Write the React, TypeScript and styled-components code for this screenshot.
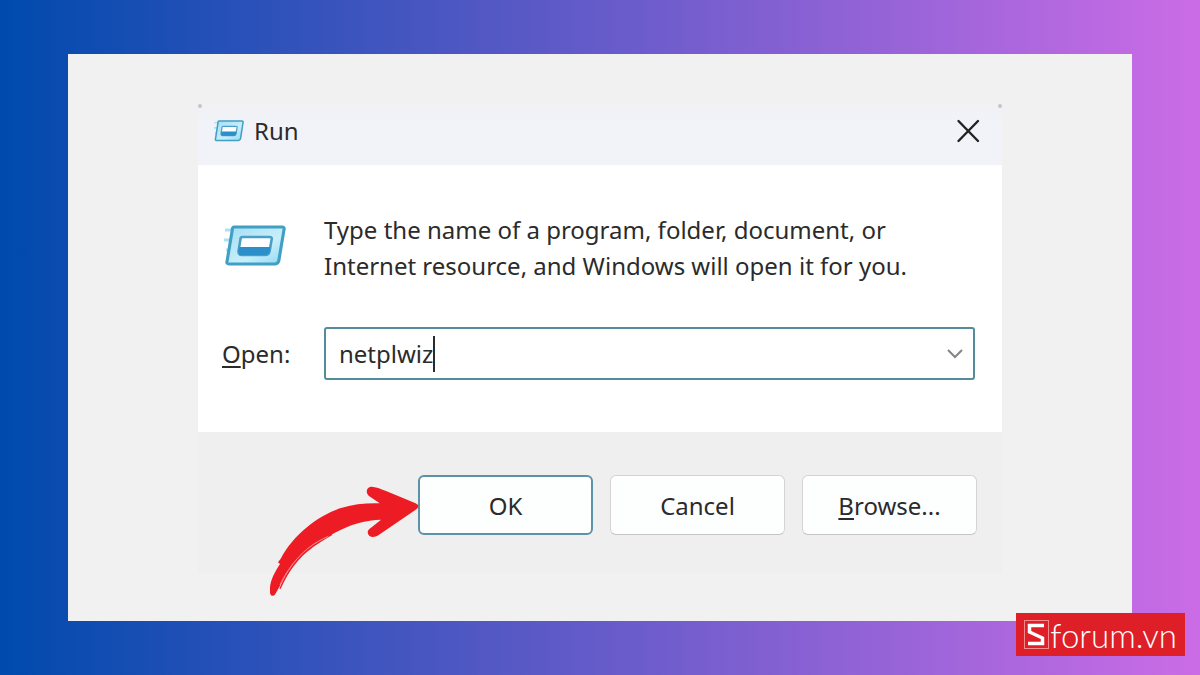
import React, { useState } from 'react';
import styled, { createGlobalStyle } from 'styled-components';

const GlobalStyle = createGlobalStyle`
  *, *::before, *::after { box-sizing: border-box; }
  body { margin: 0; }
  body, button, input { font-family: "Noto Sans", "Open Sans", sans-serif; font-size: 24px; color: #2b2b2b; }
`;

const Page = styled.main`
  position: relative;
  display: flex;
  min-height: 100vh;
  padding: 54px 68px;
  background: linear-gradient(90deg, #004aad, #cb6ce6);
`;

const Panel = styled.div`
  flex: 1;
  padding: 48px 130px;
  background: #f1f1f1;
`;

const Dialog = styled.section`
  display: flex;
  flex-direction: column;
  background: #efefef;
`;

const TitleBar = styled.header`
  position: relative;
  display: flex;
  align-items: center;
  gap: 10px;
  height: 63px;
  padding: 0 20px 5px 16px;
  background: linear-gradient(#f1f1f3, #f2f3f9 20px);

  &::before,
  &::after {
    content: "";
    position: absolute;
    top: 2px;
    width: 4px;
    height: 4px;
    border-radius: 50%;
    background: #c4c4c8;
  }
  &::before { left: 0; }
  &::after { right: 0; }
`;

const Title = styled.h1`
  flex: 1;
  margin: 0;
  font-size: 24px;
  line-height: 32px;
  font-weight: 400;
`;

const IconButton = styled.button`
  display: flex;
  align-items: center;
  justify-content: center;
  width: 28px;
  height: 28px;
  padding: 0;
  border: 0;
  background: none;
`;

const Body = styled.div`
  display: grid;
  grid-template-columns: 102px 1fr;
  align-items: center;
  row-gap: 43px;
  padding: 47px 27px 52px 24px;
  background: #fff;
`;

const IconCell = styled.div`
  display: flex;
  padding: 0 0 4px 2px;
`;

const Message = styled.p`
  max-width: 600px;
  margin: 0;
  line-height: 36px;
`;

const Label = styled.label`
  line-height: 36px;
`;

const Key = styled.span`
  text-decoration: underline;
  text-decoration-thickness: 2px;
  text-underline-offset: 3px;
`;

const ComboBox = styled.div`
  display: flex;
  align-items: center;
  height: 53px;
  padding: 0 4px 0 13px;
  border: 2px solid #548c9b;
  border-radius: 3px;
  background: #fff;
`;

const TextInput = styled.input`
  field-sizing: content;
  height: 40px;
  padding: 0;
  border: 0;
  outline: 0;
  background: none;
  caret-color: transparent;
`;

const Caret = styled.span`
  width: 2px;
  height: 36px;
  margin-right: auto;
  background: #2b2b2b;
`;

const Footer = styled.footer`
  display: flex;
  justify-content: flex-end;
  gap: 17px;
  padding: 43px 25px 38px;
`;

const ButtonSlot = styled.div`
  position: relative;
`;

const Button = styled.button<{ $primary?: boolean }>`
  width: 175px;
  height: 60px;
  padding: 0;
  border: ${p => (p.$primary ? '2px solid #5b92a8' : '1px solid #d6d3d5')};
  border-bottom-color: ${p => (p.$primary ? '#5b92a8' : '#c6c4c5')};
  border-radius: 6px;
  background: #fdfefe;
`;

const Arrow = styled.svg`
  position: absolute;
  right: 173px;
  top: 10px;
  width: 150px;
  height: 112px;
  pointer-events: none;
`;

const Brand = styled.a`
  position: absolute;
  right: 15px;
  bottom: 19px;
  display: flex;
  align-items: center;
  gap: 1px;
  height: 43px;
  padding: 0 8px;
  background: #de1f27;
  color: #fff;
  font-family: Lato, sans-serif;
  font-size: 33px;
  font-weight: 300;
  line-height: 40px;
  text-decoration: none;
`;

function RunIcon({ width, height, id }: { width: number; height: number; id: string }) {
  return (
    <svg width={width} height={height} viewBox="0 0 60 42" preserveAspectRatio="none" aria-hidden="true">
      <defs>
        <linearGradient id={id} x1="0" y1="0" x2="1" y2="1">
          <stop offset="0" stopColor="#a3def4" />
          <stop offset="0.6" stopColor="#c8effb" />
          <stop offset="1" stopColor="#8ed8f3" />
        </linearGradient>
      </defs>
      <path d="M1 5h10M0 15h8M2 25h6" stroke="#a9e2f2" strokeWidth="3" />
      <path d="M10 2H56Q59 2 58 5L53 36Q52 39 49 39H5Q2 39 3 36L8 5Q8 2 10 2Z" fill={`url(#${id})`} stroke="#419fc4" strokeWidth="3" strokeLinejoin="round" />
      <path d="M18 12H44Q47 12 46 15L44 27Q43 30 40 30H17Q14 30 14 26L16 14Q16 12 18 12Z" fill="#fff" stroke="#4a9fc8" strokeWidth="2.5" />
      <path d="M15 22H45L44 27Q43 30 40 30H17Q14 30 14 26Z" fill="#2b8fc9" />
    </svg>
  );
}

export default function App() {
  const [command, setCommand] = useState('netplwiz');
  return (
    <>
      <GlobalStyle />
      <Page>
        <Panel>
          <Dialog role="dialog" aria-labelledby="run-title">
            <TitleBar>
              <RunIcon width={30} height={22} id="run-small" />
              <Title id="run-title">Run</Title>
              <IconButton aria-label="Close">
                <svg width="24" height="24" viewBox="0 0 24 24" fill="none" stroke="#222" strokeWidth="2.4" strokeLinecap="round">
                  <path d="M2.5 2L22 22M22 2L2.5 22" />
                </svg>
              </IconButton>
            </TitleBar>
            <Body>
              <IconCell>
                <RunIcon width={62} height={42} id="run-large" />
              </IconCell>
              <Message>
                Type the name of a program, folder, document, or Internet resource, and Windows will open it for you.
              </Message>
              <Label htmlFor="command">
                <Key>O</Key>pen:
              </Label>
              <ComboBox>
                <TextInput id="command" value={command} onChange={e => setCommand(e.target.value)} spellCheck={false} />
                <Caret />
                <IconButton aria-label="Show recent commands">
                  <svg width="18" height="12" viewBox="0 0 18 12" fill="none" stroke="#858585" strokeWidth="2">
                    <path d="M2 2L9 9L16 2" />
                  </svg>
                </IconButton>
              </ComboBox>
            </Body>
            <Footer>
              <ButtonSlot>
                <Button $primary>OK</Button>
                <Arrow viewBox="60 45 450 336" aria-hidden="true">
                  <path
                    fill="#ed1c24"
                    d="M60 368C57 340 70 312 90 282L84 277L92 266C130 195 200 140 270 115C310 102 350 99 389 100L358 79C347 70 347 54 362 50C375 49 390 56 408 63L495 99C508 104 508 113 497 119L385 196C371 205 354 202 353 187C353 180 359 176 365 172L393 149C350 150 300 162 252 190C190 220 140 262 108 315L76 372C71 380 61 379 60 368Z"
                  />
                  <path d="M90 356C110 310 140 264 185 232C205 217 225 205 246 193" fill="none" stroke="#ed1c24" strokeWidth="4" />
                  <path d="M90 345C108 305 137 265 174 235C195 218 215 208 235 199" fill="none" stroke="#f5c9cb" strokeWidth="2" />
                </Arrow>
              </ButtonSlot>
              <Button>Cancel</Button>
              <Button>
                <Key>B</Key>rowse...
              </Button>
            </Footer>
          </Dialog>
        </Panel>
        <Brand href="#" aria-label="Sforum.vn">
          <svg width="25" height="29" viewBox="0 0 25 29" fill="none" aria-hidden="true">
            <rect x="0.5" y="0.5" width="24" height="28" stroke="#f58a8c" />
            <path d="M20 5.500H5.500V12L18.500 18V23.500H4" stroke="#fff" strokeWidth="3.500" />
          </svg>
          forum.vn
        </Brand>
      </Page>
    </>
  );
}
